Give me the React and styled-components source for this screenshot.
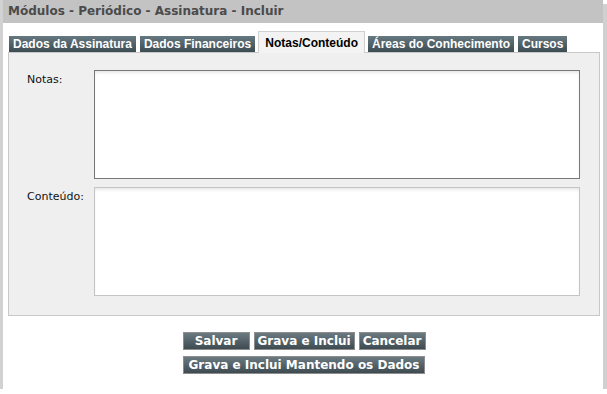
import styled, { createGlobalStyle } from "styled-components";

const Global = createGlobalStyle`
  *, *::before, *::after {
    box-sizing: border-box;
  }
  body {
    margin: 0;
    background: #fff;
    font-family: "DejaVu Sans", Verdana, sans-serif;
  }
`;

const tabs = [
  "Dados da Assinatura",
  "Dados Financeiros",
  "Notas/Conteúdo",
  "Áreas do Conhecimento",
  "Cursos",
];

const App = () => {
  return (
    <>
      <Global />
      <Window>
        <TitleBar>Módulos - Periódico - Assinatura - Incluir</TitleBar>
        <Body>
          <TabStrip>
            {tabs.map((t) => (
              <Tab key={t} $active={t === "Notas/Conteúdo"}>
                {t}
              </Tab>
            ))}
          </TabStrip>
          <Panel>
            <Field>
              <Label>Notas:</Label>
              <TextArea $focused />
            </Field>
            <Field>
              <Label>Conteúdo:</Label>
              <TextArea />
            </Field>
          </Panel>
          <Actions>
            <ButtonRow>
              <ActionButton $min={67}>Salvar</ActionButton>
              <ActionButton>Grava e Inclui</ActionButton>
              <ActionButton>Cancelar</ActionButton>
            </ButtonRow>
            <ButtonRow>
              <ActionButton $pad={5}>Grava e Inclui Mantendo os Dados</ActionButton>
            </ButtonRow>
          </Actions>
        </Body>
      </Window>
    </>
  );
};

const Window = styled.div`
  width: 603px;
  height: 389px;
  border-left: 3px solid #d2d2d2;
  box-shadow: 4px 4px 0 #d0d0d0;
  background: #fff;
  display: flex;
  flex-direction: column;
`;

const TitleBar = styled.div`
  height: 23px;
  line-height: 23px;
  background: #c3c3c3;
  padding-left: 5px;
  font-weight: bold;
  font-size: 12px;
  color: #4b4b4b;
`;

const Body = styled.div`
  padding: 8px 3px 0 5px;
  display: flex;
  flex-direction: column;
`;

const TabStrip = styled.div`
  display: flex;
  align-items: flex-end;
  gap: 4px;
  padding-left: 1px;
  height: 21px;
`;

const Tab = styled.div`
  font-family: "Liberation Sans", Arial, sans-serif;
  font-weight: bold;
  font-size: 12px;
  white-space: nowrap;
  ${({ $active }) =>
    $active
      ? `
    height: 22px;
    line-height: 22px;
    padding: 0 6px;
    margin: 0 -1px -1px;
    color: #000;
    background: #f3f3f3;
    border: 1px solid #d0d0d0;
    border-bottom: none;
    position: relative;
    z-index: 1;
  `
      : `
    height: 16px;
    line-height: 16px;
    padding: 0 4px;
    color: #fff;
    background: linear-gradient(#667880, #3d4c53);
  `}
`;

const Panel = styled.div`
  height: 264px;
  border: 1px solid #c8c8c8;
  background: #efefef;
  padding: 17px 19px 0 18px;
  display: flex;
  flex-direction: column;
  gap: 8px;
`;

const Field = styled.div`
  display: flex;
  align-items: flex-start;
`;

const Label = styled.div`
  width: 67px;
  font-size: 11px;
  color: #111;
  padding-top: 3px;
`;

const TextArea = styled.div`
  width: 487px;
  height: 109px;
  background: #fff;
  border: 1px solid ${({ $focused }) => ($focused ? "#777" : "#c4c4c4")};
  box-shadow: inset 0 3px 4px -2px #dedede;
`;

const Actions = styled.div`
  display: flex;
  flex-direction: column;
  align-items: center;
  gap: 6px;
  padding-top: 16px;
`;

const ButtonRow = styled.div`
  display: flex;
  gap: 4px;
`;

const ActionButton = styled.button`
  height: 18px;
  min-width: ${({ $min }) => ($min ? `${$min}px` : "0")};
  padding: 0 ${({ $pad }) => $pad ?? 3}px;
  border: 1px solid #8d8d8d;
  background: linear-gradient(#6b7a81, #3e4b51);
  color: #fff;
  font-family: "DejaVu Sans", Verdana, sans-serif;
  font-weight: bold;
  font-size: 12px;
  line-height: 16px;
  cursor: pointer;
`;

export default App;
